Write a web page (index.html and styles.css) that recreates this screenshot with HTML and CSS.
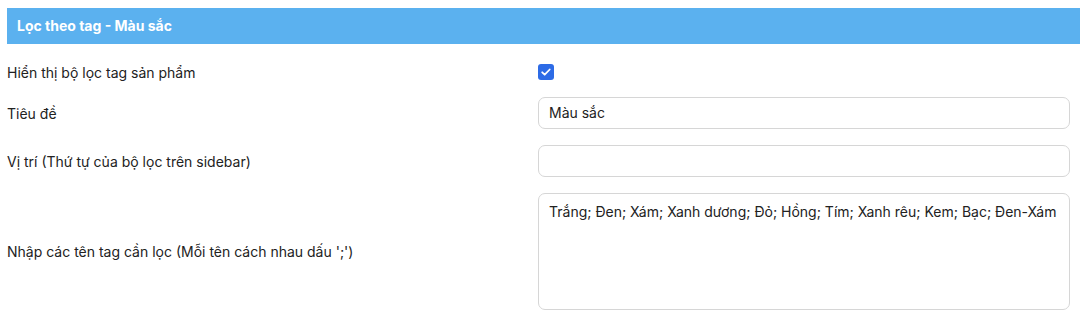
FILE: index.html
```html
<!DOCTYPE html>
<html lang="vi">
<head>
<meta charset="utf-8">
<link rel="stylesheet" href="styles.css">
</head>
<body>
<section class="panel">
  <div class="panel-head">Lọc theo tag - Màu sắc</div>
  <div class="form">
    <label class="lbl">Hiển thị bộ lọc tag sản phẩm</label>
    <div class="ctl"><span class="check"><svg viewBox="0 0 16 16" width="16" height="16"><path d="M4.2 8.3l2.5 2.4 5-5.2" fill="none" stroke="#fff" stroke-width="1.8" stroke-linecap="round" stroke-linejoin="round"/></svg></span></div>

    <label class="lbl">Tiêu đề</label>
    <div class="ctl"><div class="input">Màu sắc</div></div>

    <label class="lbl">Vị trí (Thứ tự của bộ lọc trên sidebar)</label>
    <div class="ctl"><div class="input"></div></div>

    <label class="lbl">Nhập các tên tag cần lọc (Mỗi tên cách nhau dấu ';')</label>
    <div class="ctl"><div class="textarea">Trắng; Đen; Xám; Xanh dương; Đỏ; Hồng; Tím; Xanh rêu; Kem; Bạc; Đen-Xám</div></div>
  </div>
</section>
</body>
</html>
```
FILE: styles.css
```css
html, body {
  margin: 0;
  padding: 0;
  background: #fff;
}
body {
  padding: 8px 0 0 7px;
  font-family: Inter, "Noto Sans", sans-serif;
  font-size: 14px;
  color: #222;
  overflow: hidden;
}
.panel-head {
  background: #5bb1ef;
  color: #fff;
  font-weight: 700;
  font-size: 14px;
  height: 36px;
  line-height: 36px;
  padding-left: 10px;
}
.form {
  display: grid;
  grid-template-columns: 531px 532px;
  row-gap: 16px;
  padding-top: 19px;
  align-items: center;
}
.lbl {
  color: #222;
}
.check {
  display: block;
  width: 16px;
  height: 16px;
  border-radius: 3px;
  background: #2d6be6;
  margin: 1px 0;
}
.check svg { display: block; }
.input, .textarea {
  box-sizing: border-box;
  border: 1px solid #d6d6d6;
  border-radius: 7px;
  padding: 0 10px;
  color: #222;
}
.input {
  height: 32px;
  line-height: 30px;
}
.textarea {
  height: 117px;
  padding-top: 8px;
  line-height: 20px;
}
```
